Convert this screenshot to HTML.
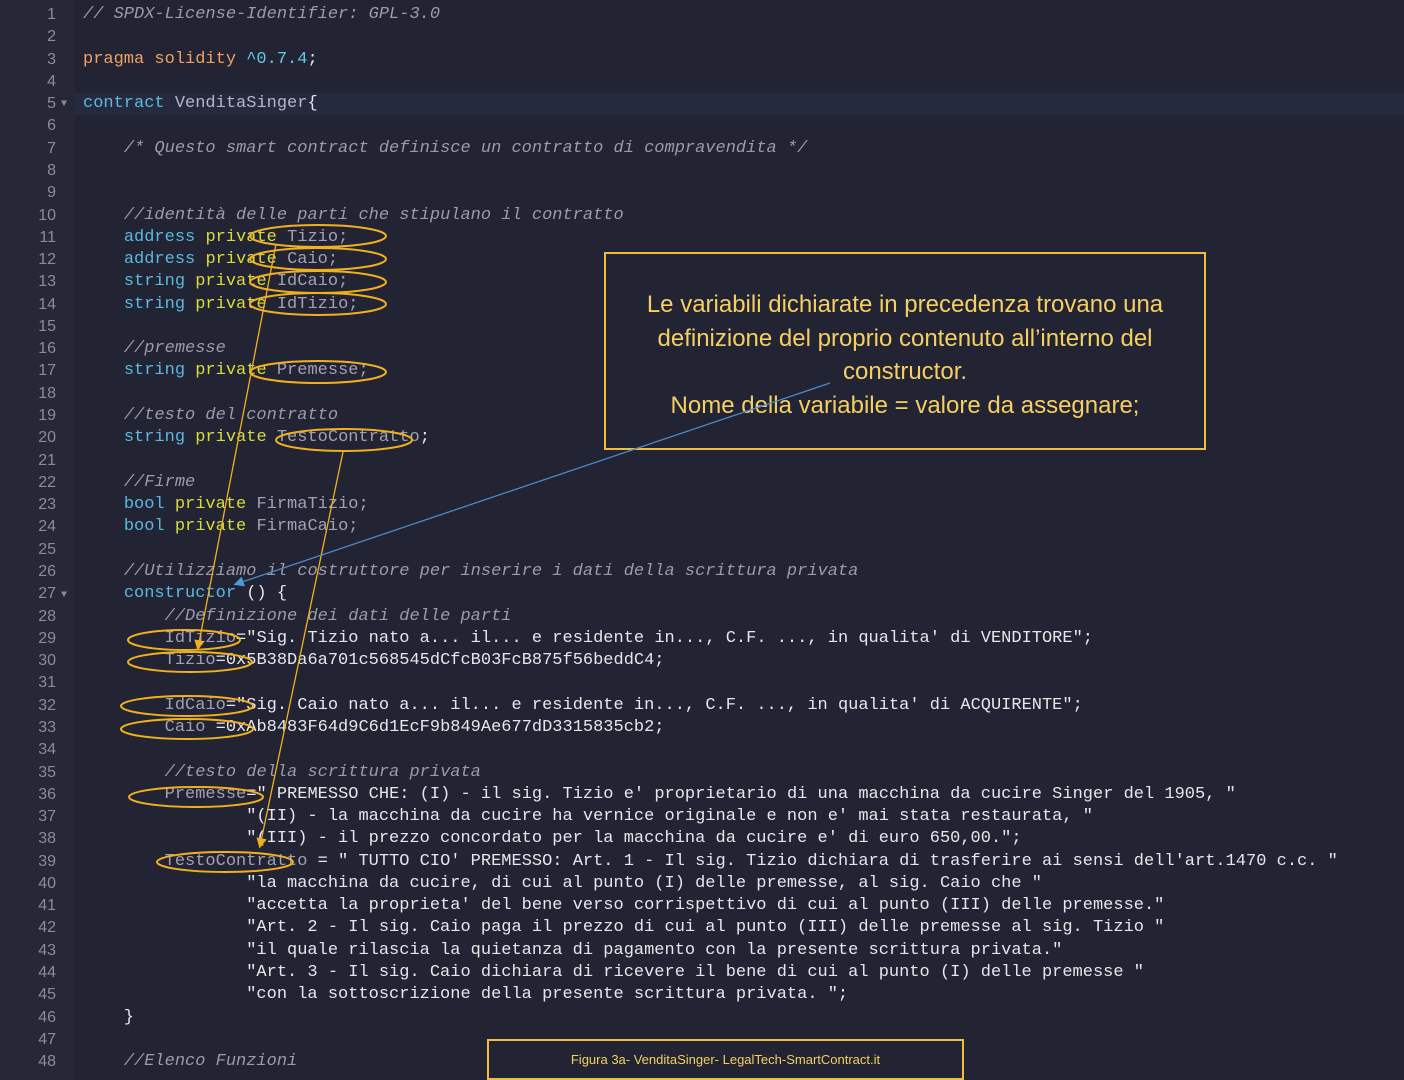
<!DOCTYPE html>
<html><head><meta charset="utf-8"><style>
body{margin:0;width:1404px;height:1080px;background:#222333;overflow:hidden;position:relative;font-family:"Liberation Mono",monospace;}
#gut{position:absolute;left:0;top:0;width:74px;height:1080px;background:#262737;}
.ln{position:absolute;left:0;width:56px;text-align:right;color:#8a8c9c;font-size:16px;font-family:"Liberation Sans",sans-serif;}
.l{position:absolute;left:83px;white-space:pre;font-size:17px;color:#e6e6ea;line-height:22px;}
.c{color:#9a9ca8;font-style:italic}
.k{color:#5bb8de}
.p{color:#d8dc3c}
.o{color:#f0a062}
.n{color:#62c8e8}
.v{color:#a0a2b4}
.fold{position:absolute;left:61px;color:#8a8c9c;font-size:10px;}
</style></head><body>
<div id="gut"></div>
<div style="position:absolute;left:74px;top:93px;width:1330px;height:22px;background:#262a3e"></div>
<div id="code"></div>
<div class="fold" style="top:99px">▼</div>
<div class="fold" style="top:590px">▼</div>
<div style="position:absolute;left:604px;top:252px;width:602px;height:198px;border:2px solid #f0be3c;box-sizing:border-box;color:#f5cf62;font-family:'Liberation Sans',sans-serif;font-size:24px;line-height:33.5px;text-align:center;padding-top:34px">Le variabili dichiarate in precedenza trovano una<br>definizione del proprio contenuto all’interno del<br>constructor.<br>Nome della variabile = valore da assegnare;</div>
<div style="position:absolute;left:487px;top:1039px;width:477px;height:41px;border:2px solid #f0be3c;box-sizing:border-box;background:#222333;color:#f5cf62;font-family:'Liberation Sans',sans-serif;font-size:13px;text-align:center;line-height:38px">Figura 3a- VenditaSinger- LegalTech-SmartContract.it</div>
<svg width="1404" height="1080" style="position:absolute;left:0;top:0" fill="none">
<defs><marker id="ay" markerWidth="8" markerHeight="8" refX="6" refY="4" orient="auto"><path d="M0,0L8,4L0,8z" fill="#f0b020"/></marker>
<marker id="ab" markerWidth="8" markerHeight="8" refX="6" refY="4" orient="auto"><path d="M0,0L8,4L0,8z" fill="#4a9ad8"/></marker></defs>
<g stroke="#f0b020" stroke-width="2">
<ellipse cx="318" cy="236" rx="68" ry="11"/><ellipse cx="318" cy="259" rx="68" ry="11"/>
<ellipse cx="318" cy="282" rx="68" ry="11"/><ellipse cx="318" cy="304" rx="68" ry="11"/>
<ellipse cx="318" cy="372" rx="68" ry="11"/><ellipse cx="344" cy="440" rx="68" ry="11"/>
<ellipse cx="184" cy="640" rx="56" ry="10"/><ellipse cx="190" cy="662" rx="62" ry="10"/>
<ellipse cx="187" cy="706" rx="66" ry="10"/><ellipse cx="187" cy="729" rx="66" ry="10"/>
<ellipse cx="196" cy="797" rx="67" ry="10"/><ellipse cx="225" cy="862" rx="68" ry="10"/>
</g>
<g stroke="#f0b020" stroke-width="1.3">
<line x1="276" y1="244" x2="198" y2="648" marker-end="url(#ay)"/>
<line x1="343" y1="452" x2="260" y2="846" marker-end="url(#ay)"/>
</g>
<line x1="830" y1="383" x2="236" y2="584" stroke="#4a8ac8" stroke-width="1.3" marker-end="url(#ab)"/>
</svg>
<script>
var L=[
'<span class="c">// SPDX-License-Identifier: GPL-3.0</span>','',
'<span class="o">pragma solidity</span> <span class="n">^0.7.4</span>;','',
'<span class="k">contract</span> <span class="v" style="color:#b4b6c4">VenditaSinger</span>{','',
'    <span class="c">/* Questo smart contract definisce un contratto di compravendita */</span>','','',
'    <span class="c">//identità delle parti che stipulano il contratto</span>',
'    <span class="k">address</span> <span class="p">private</span> <span class="v">Tizio;</span>',
'    <span class="k">address</span> <span class="p">private</span> <span class="v">Caio;</span>',
'    <span class="k">string</span> <span class="p">private</span> <span class="v">IdCaio;</span>',
'    <span class="k">string</span> <span class="p">private</span> <span class="v">IdTizio;</span>','',
'    <span class="c">//premesse</span>',
'    <span class="k">string</span> <span class="p">private</span> <span class="v">Premesse;</span>','',
'    <span class="c">//testo del contratto</span>',
'    <span class="k">string</span> <span class="p">private</span> <span class="v">TestoContratto</span>;','',
'    <span class="c">//Firme</span>',
'    <span class="k">bool</span> <span class="p">private</span> <span class="v">FirmaTizio;</span>',
'    <span class="k">bool</span> <span class="p">private</span> <span class="v">FirmaCaio;</span>','',
'    <span class="c">//Utilizziamo il costruttore per inserire i dati della scrittura privata</span>',
'    <span class="k">constructor</span> () {',
'        <span class="c">//Definizione dei dati delle parti</span>',
'        <span class="v">IdTizio</span>="Sig. Tizio nato a... il... e residente in..., C.F. ..., in qualita\' di VENDITORE";',
'        <span class="v">Tizio</span>=0x5B38Da6a701c568545dCfcB03FcB875f56beddC4;','',
'        <span class="v">IdCaio</span>="Sig. Caio nato a... il... e residente in..., C.F. ..., in qualita\' di ACQUIRENTE";',
'        <span class="v">Caio</span> =0xAb8483F64d9C6d1EcF9b849Ae677dD3315835cb2;','',
'        <span class="c">//testo della scrittura privata</span>',
'        <span class="v">Premesse</span>=" PREMESSO CHE: (I) - il sig. Tizio e\' proprietario di una macchina da cucire Singer del 1905, "',
'                "(II) - la macchina da cucire ha vernice originale e non e\' mai stata restaurata, "',
'                "(III) - il prezzo concordato per la macchina da cucire e\' di euro 650,00.";',
'        <span class="v">TestoContratto</span> = " TUTTO CIO\' PREMESSO: Art. 1 - Il sig. Tizio dichiara di trasferire ai sensi dell\'art.1470 c.c. "',
'                "la macchina da cucire, di cui al punto (I) delle premesse, al sig. Caio che "',
'                "accetta la proprieta\' del bene verso corrispettivo di cui al punto (III) delle premesse."',
'                "Art. 2 - Il sig. Caio paga il prezzo di cui al punto (III) delle premesse al sig. Tizio "',
'                "il quale rilascia la quietanza di pagamento con la presente scrittura privata."',
'                "Art. 3 - Il sig. Caio dichiara di ricevere il bene di cui al punto (I) delle premesse "',
'                "con la sottoscrizione della presente scrittura privata. ";',
'    }','',
'    <span class="c">//Elenco Funzioni</span>'];
var h='';
for(var i=0;i<L.length;i++){var t=4+i*22.28;
h+='<div class="ln" style="top:'+(t+2)+'px">'+(i+1)+'</div><div class="l" style="top:'+t+'px">'+L[i]+'</div>';}
document.getElementById('code').innerHTML=h;
</script>
</body></html>
